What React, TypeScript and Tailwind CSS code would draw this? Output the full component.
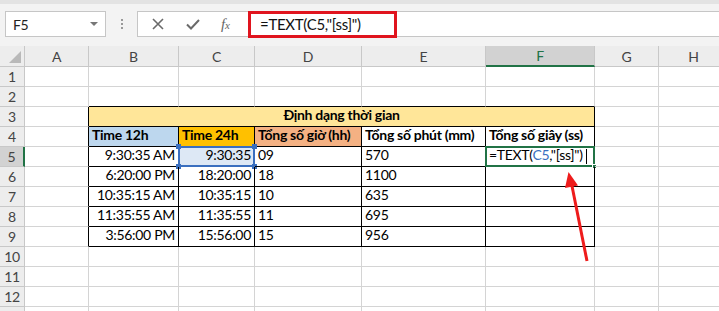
import { ReactNode } from "react";

const cols = ["A", "B", "C", "D", "E", "F", "G", "H"];

const data = [
  ["9:30:35 AM", "9:30:35", "09", "570"],
  ["6:20:00 PM", "18:20:00", "18", "1100"],
  ["10:35:15 AM", "10:35:15", "10", "635"],
  ["11:35:55 AM", "11:35:55", "11", "695"],
  ["3:56:00 PM", "15:56:00", "15", "956"],
];

const Cell = ({
  children,
  className = "",
}: {
  children?: ReactNode;
  className?: string;
}) => (
  <div
    className={`relative flex items-end border-r border-b border-[#d4d4d4] px-[3px] pb-[1px] whitespace-nowrap ${className}`}
  >
    {children}
  </div>
);

const RowHead = ({ n, active }: { n?: number; active?: boolean }) => (
  <div
    className={`flex items-center justify-center border-r border-b border-[#c8c8c8] text-[#444] ${
      active ? "bg-[#d2d2d2] border-r-2 border-r-[#217346]" : "bg-[#ededed]"
    }`}
  >
    {n}
  </div>
);

const Handle = ({ className }: { className: string }) => (
  <span className={`absolute h-[5px] w-[5px] bg-[#3a6fbf] ${className}`} />
);

export default function App() {
  return (
    <div className="relative h-[311px] w-[719px] overflow-hidden bg-white font-['Lato',sans-serif] text-[14px] tracking-[-0.3px] text-black">
      {/* formula bar */}
      <div className="h-[46px] border-t-[4px] border-[#e3e3e3] bg-[#f3f3f3] pt-[7px]">
        <div className="flex h-[26px] items-stretch">
          <div className="ml-[5px] flex w-[101px] items-center justify-between border border-[#c6c6c6] bg-white pl-[7px] pr-[7px] text-[#222]">
            <span>F5</span>
            <span className="h-0 w-0 border-x-[4px] border-t-[4px] border-x-transparent border-t-[#777]" />
          </div>
          <div className="flex w-[31px] flex-col items-center justify-center gap-[2px]">
            <span className="h-[2px] w-[2px] bg-[#999]" />
            <span className="h-[2px] w-[2px] bg-[#999]" />
            <span className="h-[2px] w-[2px] bg-[#999]" />
          </div>
          <div className="flex w-[108px] items-center border border-r-0 border-[#c6c6c6] bg-white text-[#666]">
            <svg className="ml-[14px]" width="12" height="12" viewBox="0 0 12 12">
              <path d="M1 1L11 11M11 1L1 11" stroke="#6a6a6a" strokeWidth="1.6" />
            </svg>
            <svg className="ml-[22px]" width="14" height="11" viewBox="0 0 14 11">
              <path d="M1 5.5L5 9.5L13 1" stroke="#6a6a6a" strokeWidth="2" fill="none" />
            </svg>
            <span className="ml-[21px] font-['Liberation_Serif',serif] text-[15px] italic">
              f<span className="text-[11px]">x</span>
            </span>
          </div>
          <div className="flex flex-1 items-center border-y border-[#c6c6c6] bg-white">
            <div className="-my-[1px] ml-[3px] flex h-[27px] w-[149px] items-center border-[3px] border-[#e0141e] pl-[9px] text-[15px] text-[#111]">
              =TEXT(C5,"[ss]")
            </div>
          </div>
        </div>
      </div>

      {/* sheet */}
      <div className="grid grid-cols-[25px_64px_90px_76px_107px_124px_109px_64px_70px] grid-rows-[21px] auto-rows-[20px]">
        {/* column headers */}
        <div className="relative border-r border-b border-[#c8c8c8] bg-[#ededed]">
          <svg className="absolute right-[3px] bottom-[3px]" width="12" height="12" viewBox="0 0 12 12">
            <path d="M12 0L12 12L0 12Z" fill="#b9b9b9" />
          </svg>
        </div>
        {cols.map((c) => (
          <div
            key={c}
            className={`flex items-center justify-center border-r border-b border-[#c8c8c8] text-[#444] ${
              c === "F" ? "border-b-2 border-b-[#217346] bg-[#d2d2d2] text-[#217346]" : "bg-[#ededed]"
            }`}
          >
            {c}
          </div>
        ))}

        {/* row 1, 2 */}
        {[1, 2].map((r) => (
          <>
            <RowHead key={`h${r}`} n={r} />
            {cols.map((c) => (
              <Cell
                key={`${c}${r}`}
                className={r === 2 && "BCDEF".includes(c) ? "border-b-black" : ""}
              />
            ))}
          </>
        ))}

        {/* row 3 */}
        <RowHead n={3} />
        <Cell className="border-r-black" />
        <Cell className="col-span-5 justify-center border-r-black border-b-black bg-[#ffe699] font-bold">
          Định dạng thời gian
        </Cell>
        <Cell />
        <Cell />

        {/* row 4 */}
        <RowHead n={4} />
        <Cell className="border-r-black" />
        <Cell className="border-r-black border-b-black bg-[#bdd7ee] font-bold">Time 12h</Cell>
        <Cell className="border-r-black border-b-black bg-[#ffc000] font-bold">Time 24h</Cell>
        <Cell className="border-r-black border-b-black bg-[#f4b183] font-bold">Tổng số giờ (hh)</Cell>
        <Cell className="border-r-black border-b-black font-bold">Tổng số phút (mm)</Cell>
        <Cell className="border-r-black border-b-black font-bold">Tổng số giây (ss)</Cell>
        <Cell />
        <Cell />

        {/* data rows */}
        {data.map((row, i) => {
          const r = i + 5;
          return (
            <>
              <RowHead key={`h${r}`} n={r} active={r === 5} />
              <Cell key={`a${r}`} className="border-r-black" />
              <Cell key={`b${r}`} className="justify-end border-r-black border-b-black">
                {row[0]}
              </Cell>
              <Cell
                key={`c${r}`}
                className={`justify-end border-r-black border-b-black ${r === 5 ? "bg-[#dde8f5]" : ""}`}
              >
                {row[1]}
                {r === 5 && (
                  <>
                    <span className="pointer-events-none absolute -left-[1px] -top-[1px] -right-[1px] -bottom-[1px] border-2 border-[#3a6fbf]" />
                    <Handle className="-left-[3px] -top-[3px]" />
                    <Handle className="-right-[3px] -top-[3px]" />
                    <Handle className="-left-[3px] -bottom-[3px]" />
                    <Handle className="-right-[3px] -bottom-[3px]" />
                  </>
                )}
              </Cell>
              <Cell key={`d${r}`} className="border-r-black border-b-black">
                {row[2]}
              </Cell>
              <Cell key={`e${r}`} className="border-r-black border-b-black">
                {row[3]}
              </Cell>
              <Cell key={`f${r}`} className="border-r-black border-b-black">
                {r === 5 && (
                  <>
                    <span>
                      =TEXT(<span className="text-[#3a6fbf]">C5</span>,"[ss]")
                    </span>
                    <span className="ml-[3px] mb-[1px] h-[15px] w-[1px] bg-black" />
                    <span className="pointer-events-none absolute -left-[1px] -top-[1px] -right-[1px] -bottom-[1px] border-2 border-[#217346]" />
                    <span className="absolute -right-[3px] -bottom-[3px] h-[5px] w-[5px] border border-white bg-[#217346]" />
                  </>
                )}
              </Cell>
              <Cell key={`g${r}`} />
              <Cell key={`h2${r}`} />
            </>
          );
        })}

        {/* rows 10-13 */}
        {[10, 11, 12, 13].map((r) => (
          <>
            <RowHead key={`h${r}`} n={r < 13 ? r : undefined} />
            {cols.map((c) => (
              <Cell key={`${c}${r}`} />
            ))}
          </>
        ))}
      </div>

      {/* red arrow annotation */}
      <svg
        className="pointer-events-none absolute left-0 top-0"
        width="719"
        height="311"
        viewBox="0 0 719 311"
      >
        <line x1="587" y1="261" x2="572" y2="186" stroke="#ee1c1c" strokeWidth="3" />
        <path d="M568.5 172L565 188L578 185.5Z" fill="#ee1c1c" />
      </svg>
    </div>
  );
}
